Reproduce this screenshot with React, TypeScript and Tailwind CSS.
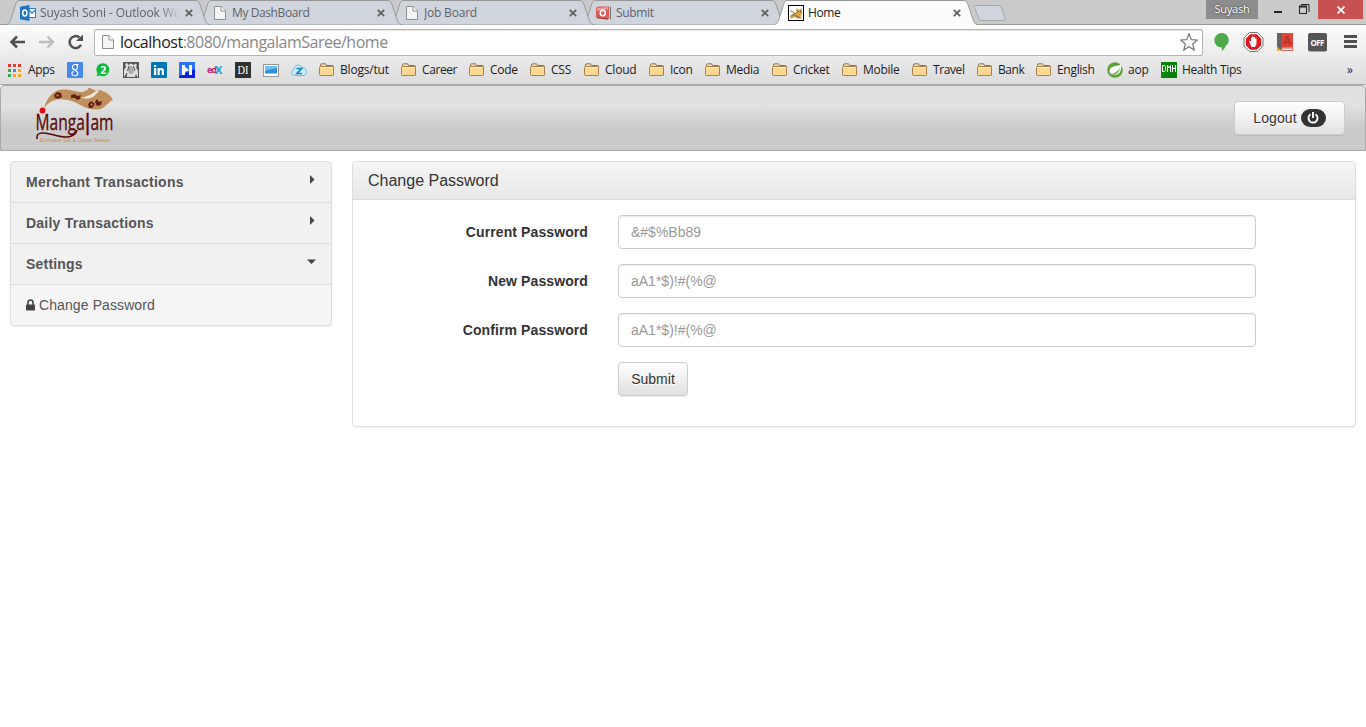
import React from "react";

const ui = "font-['Open_Sans','Noto_Sans',sans-serif]";

function PageIcon() {
  return (
    <svg width="12" height="14" viewBox="0 0 12 14" className="block">
      <path d="M.5.5H7L11.500 5V13.500H.5Z" fill="#f4f4f4" stroke="#8f8f8f" />
      <path d="M7 .5V5H11.500" fill="#fff" stroke="#8f8f8f" />
    </svg>
  );
}

function OutlookIcon() {
  return (
    <svg width="16" height="16" viewBox="0 0 16 16">
      <rect x="8.500" y="3.500" width="7" height="9" fill="#fff" stroke="#2a7fc9" />
      <path d="M9 5l3 3.200L15.500 5" fill="none" stroke="#2a7fc9" strokeWidth="1.200" />
      <path d="M0 1.800L9.500 0V16L0 14.200Z" fill="#1f74bf" />
      <ellipse cx="4.800" cy="8" rx="2.100" ry="2.900" fill="none" stroke="#fff" strokeWidth="1.500" />
    </svg>
  );
}

function SubmitIcon() {
  return (
    <svg width="16" height="16" viewBox="0 0 16 16">
      <path d="M0 3L2 1.500H13V13.500L11 14.500L0 12.500Z" fill="#d9605a" />
      <path d="M1 3L12 2V4.500L1 6Z" fill="#ec9a92" />
      <path d="M13 1.500H14V14H13Z" fill="#c9c4c4" />
      <path d="M14.500 1.500V14.500" stroke="#777" />
      <ellipse cx="6.800" cy="8" rx="2.500" ry="2.800" fill="none" stroke="#fff" strokeWidth="1.500" />
      <path d="M1 12.800L12 14" stroke="#9d2f2b" />
    </svg>
  );
}

function TomcatIcon() {
  return (
    <svg width="16" height="16" viewBox="0 0 16 16">
      <rect x=".5" y=".5" width="15" height="15" fill="#fff" stroke="#000" />
      <path d="M2 12L4 9L8 7.500L8.500 3L10.500 4.500H12L14 3V9L12.500 11L14 13.500H9L7 12L3 13.500Z" fill="#d0a24c" />
      <path d="M2 5.500L5 7L8 9M3 11L6 9.500L9 11.500L12 12.500" fill="none" stroke="#6f6350" strokeWidth=".9" />
      <path d="M9.500 6.500H10.500M12 6.500H13" stroke="#3d2f15" />
    </svg>
  );
}

type TabProps = { icon: React.ReactNode; title: string; layer: string; active?: boolean; titleClass: string; fade?: boolean };

function Tab({ icon, title, layer, active, titleClass, fade }: TabProps) {
  return (
    <div className={`grid h-[25px] w-[192px] shrink-0 ${layer}`}>
      <svg width="205" height="25" viewBox="0 0 205 25" className="overflow-visible [grid-area:1/1]">
        <path
          d={
            active
              ? "M0 25L0 24.500C3 24 4 22 5 19L9.500 4.500C10.500 1.500 12 .5 14 .5H189C192 .5 193 2 194 4.500L199 19.500C200 23 201 24.500 204 24.500V25Z"
              : "M0 24.500C3 24 4 22 5 19L9.500 4.500C10.500 1.500 12 .5 14 .5H189C192 .5 193 2 194 4.500L199 19.500C200 23 201 24.500 204 24.500Z"
          }
          fill={active ? "#fcfcfc" : "#d0d5dd"}
        />
        <path
          d="M0 24.500C3 24 4 22 5 19L9.500 4.500C10.500 1.500 12 .5 14 .5H189C192 .5 193 2 194 4.500L199 19.500C200 23 201 24.500 204 24.500"
          fill="none"
          stroke="#989898"
        />
      </svg>
      <div className="flex items-center pt-[1px] pl-[14px] [grid-area:1/1]">
        <span className="flex w-[16px] shrink-0 justify-center">{icon}</span>
        <span
          className={`ml-1 w-[140px] shrink-0 overflow-hidden whitespace-nowrap text-[12px] leading-[16px] ${titleClass} ${active ? "text-[#222]" : "text-[#5f6268]"} ${fade ? "[mask-image:linear-gradient(to_right,#000_85%,transparent)]" : ""}`}
        >
          {title}
        </span>
        <svg width="8" height="8" viewBox="0 0 8 8" className="ml-[5px] shrink-0">
          <path d="M.8.800L7.200 7.200M7.200.8L.8 7.200" stroke="#5c5c5c" strokeWidth="1.700" />
        </svg>
      </div>
    </div>
  );
}

function TabStrip() {
  return (
    <div className="flex h-[25px] bg-[#cacaca] shadow-[inset_0_-1px_0_#999]">
      <div className="flex w-[966px] shrink-0 pl-[6px]">
        <Tab icon={<OutlookIcon />} title="Suyash Soni - Outlook We" titleClass="tracking-[-0.1px]" layer="z-[4]" fade />
        <Tab icon={<PageIcon />} title="My DashBoard" titleClass="tracking-[-0.4px]" layer="z-[3]" />
        <Tab icon={<PageIcon />} title="Job Board" titleClass="tracking-[-0.2px]" layer="z-[2]" />
        <Tab icon={<SubmitIcon />} title="Submit" titleClass="tracking-[-0.35px]" layer="z-[1]" />
        <Tab icon={<TomcatIcon />} title="Home" titleClass="tracking-[-0.4px]" layer="z-[10]" active />
      </div>
      <svg width="34" height="18" viewBox="0 0 34 18" className="mt-[4px] ml-[7px] shrink-0">
        <path d="M3 1.500H25C27 1.500 28 2 28.700 4L32 14C32.500 15.500 32 16.500 30.500 16.500H9C7 16.500 6.500 16 6 14.500L1.500 3.500C1 2.200 1.500 1.500 3 1.500Z" fill="#d0d5dd" stroke="#a5a5a5" />
      </svg>
      <div className="ml-auto flex h-[19px] items-start">
        <div className="flex h-[19px] w-[52px] items-center justify-center bg-[#8c8c8c] text-[11px] tracking-[-0.2px] text-white [text-shadow:0_0_2px_#222]">Suyash</div>
        <svg width="60" height="19" viewBox="0 0 60 19">
          <path d="M16 12H24" stroke="#222" strokeWidth="2" />
          <rect x="41.500" y="6.500" width="7" height="7" fill="none" stroke="#222" />
          <path d="M41 6.500H49" stroke="#222" strokeWidth="2" />
          <path d="M43 4.500H51V12" fill="none" stroke="#222" />
        </svg>
        <div className="mr-[3px] flex h-[19px] w-[45px] items-center justify-center bg-[#c75050]">
          <svg width="8" height="8" viewBox="0 0 8 8">
            <path d="M.5.500L7.500 7.500M7.500.5L.5 7.500" stroke="#fff" strokeWidth="1.700" />
          </svg>
        </div>
      </div>
    </div>
  );
}

function Toolbar() {
  return (
    <div className="flex h-[34px] items-center">
      <svg width="84" height="20" viewBox="0 0 84 20" className="ml-[6px] shrink-0">
        <path d="M19 10H6M11 4.500L5.500 10L11 15.500" fill="none" stroke="#505050" strokeWidth="2.500" />
        <path d="M33 10H46M41.500 4.500L47 10L41.500 15.500" fill="none" stroke="#bcbcbc" strokeWidth="2.300" />
        <path d="M75 12.800A6 6 0 1 1 73.500 5.500" fill="none" stroke="#505050" strokeWidth="2.500" />
        <path d="M77 2.500V9H70Z" fill="#505050" />
      </svg>
      <div className="ml-[4px] flex h-[27px] w-[1109px] shrink-0 items-center rounded-[2px] border border-[#b5b5b5] bg-white pl-[7px] shadow-[inset_0_1px_0_#e6e6e6]">
        <PageIcon />
        <span className="ml-[6px] text-[16px] tracking-[-0.49px] whitespace-nowrap text-[#888]">
          <span className="text-[#222]">localhost</span>:8080/mangalamSaree/home
        </span>
        <svg width="18" height="18" viewBox="0 0 18 18" className="mr-[4px] ml-auto">
          <path d="M9 .8L11.300 6.600L17.300 7L12.700 11L14.200 17L9 13.700L3.800 17L5.300 11L.7 7L6.700 6.600Z" fill="#fff" stroke="#777" strokeWidth="1.200" />
        </svg>
      </div>
      <svg width="160" height="20" viewBox="0 0 160 20" className="ml-[3px] shrink-0 overflow-visible">
        <path d="M15.500 1A7.200 7 0 0 1 20 13.500Q18.500 17 16 19L15.700 15.500A7.200 7.200 0 0 1 15.500 1Z" fill="#4da94a" />
        <path d="M43.400 .5H51.600L57 6V14L51.600 19.500H43.400L38 14V6Z" fill="#fff" stroke="#777" />
        <path d="M44.200 2.300H50.800L55.200 6.700V13.300L50.800 17.700H44.200L39.800 13.300V6.700Z" fill="#dc1a22" />
        <path d="M43 9L44.300 8.700L45 10V5.500H46.300V9V4.500H47.700V9V5H49.100V9.500V6.500H50.500V12L49 15H45.500Z" fill="#fff" />
        <rect x="71" y="1" width="5" height="17" fill="#62666a" />
        <rect x="76" y="1" width="11" height="14.500" fill="#df4437" />
        <path d="M76 16H87V18.500H75Z" fill="#f1e8e8" stroke="#ce3b32" strokeWidth=".7" />
        <path d="M71 19V14.500L73.500 17L76 18.500Z" fill="#f0ae24" />
        <text x="81" y="13" textAnchor="middle" fontSize="11.500" fontWeight="700" fill="#b93228">A</text>
        <rect x="102" y="1" width="19" height="18.500" rx="2" fill="#555" />
        <text x="111.500" y="13.500" textAnchor="middle" fontSize="8" fontWeight="700" textLength="14" fill="#fff">OFF</text>
        <path d="M138 4.500H151M138 9.500H151M138 14.500H151" stroke="#515151" strokeWidth="2.800" />
      </svg>
    </div>
  );
}

function Folder() {
  return (
    <svg width="15" height="14" viewBox="0 0 15 14" className="shrink-0">
      <path d="M1.500 12V2Q1.500 .8 2.500 .8H6.500L7.500 2.500H13.500Q14.500 2.500 14.500 3.500V12Z" fill="#f4dcaa" stroke="#8c7350" />
      <path d="M.5 4.500Q.5 3.500 1.500 3.500H13.500Q14.500 3.500 14.500 4.500V11.500Q14.500 12.500 13.500 12.500H1.500Q.5 12.500 .5 11.500Z" fill="#ffd994" stroke="#a97f4c" />
      <path d="M1.500 4.500H13.500" stroke="#fff0c8" />
    </svg>
  );
}

const folders = [
  { name: "Blogs/tut", width: "w-[82px]", spacing: "tracking-[-0.2px]" },
  { name: "Career", width: "w-[68px]", spacing: "tracking-[-0.4px]" },
  { name: "Code", width: "w-[61px]", spacing: "tracking-[-0.3px]" },
  { name: "CSS", width: "w-[54px]", spacing: "tracking-[-0.2px]" },
  { name: "Cloud", width: "w-[65px]", spacing: "tracking-[-0.2px]" },
  { name: "Icon", width: "w-[56px]", spacing: "tracking-[-0.3px]" },
  { name: "Media", width: "w-[67px]", spacing: "tracking-[-0.3px]" },
  { name: "Cricket", width: "w-[70px]", spacing: "tracking-[-0.3px]" },
  { name: "Mobile", width: "w-[70px]", spacing: "tracking-[-0.3px]" },
  { name: "Travel", width: "w-[65px]", spacing: "tracking-[-0.4px]" },
  { name: "Bank", width: "w-[59px]", spacing: "tracking-[-0.4px]" },
  { name: "English", width: "w-[71px]", spacing: "tracking-[-0.3px]" },
];

const dots = ["#e33b2e", "#e33b2e", "#e33b2e", "#3aa757", "#4285f4", "#f4a623", "#3aa757", "#f4a623", "#f4a623"];

function SiteIcons() {
  return (
    <div className="flex w-[252px] shrink-0 gap-[12px]">
      <svg width="16" height="16" viewBox="0 0 16 16"><rect width="16" height="16" rx="1" fill="#4787ed" /><path d="M11.500 2.500H8A2.700 2.600 0 1 0 8.500 7.800L9.500 9.500A3 2.300 0 1 1 6.500 9.400M9.500 2.700A3 3 0 0 1 8.500 7.800" fill="none" stroke="#fff" strokeWidth="1.200" /></svg>
      <svg width="16" height="16" viewBox="0 0 16 16"><path d="M8 .8A7 7 0 1 1 4.500 14L1 15L2 11.500A7 7 0 0 1 8 .8Z" fill="#10b83c" stroke="#fff" strokeWidth=".6" /><text x="8.200" y="12" textAnchor="middle" fontSize="10.500" fontWeight="700" fill="#fff">2</text></svg>
      <svg width="16" height="16" viewBox="0 0 16 16"><rect width="16" height="16" fill="#555" /><path d="M2 2L4 1L5.500 3L8 1.500L11 3L12.500 1.500L14 3L13 5L15 9V16L13 12L12 15H4L3 12L1 15V8L3 5Z" fill="#dededc" /><ellipse cx="8" cy="8" rx="2.800" ry="4" fill="#aaa" /><path d="M4.500 9L6 4M10.500 4L12 9M4 11L3 14" stroke="#555" /></svg>
      <svg width="16" height="16" viewBox="0 0 16 16"><rect width="16" height="16" rx="1" fill="#0077b5" /><path d="M3 6H5.200V13H3ZM3 3H5.200V5H3ZM6.500 6H8.600V7C9.500 5.500 13 5.300 13 9V13H10.800V9.500C10.800 7.300 8.700 7.500 8.700 9.500V13H6.500Z" fill="#fff" /></svg>
      <svg width="16" height="16" viewBox="0 0 16 16"><rect width="16" height="16" fill="#2b74fa" /><path d="M16 7V16H0V14Z" fill="#0a20e0" /><path d="M3 3H6V13H3ZM10 3H13V13H10ZM6 5L10 8L6 10Z" fill="#fff" /></svg>
      <svg width="16" height="16" viewBox="0 0 16 16"><text x="0" y="11" fontSize="9" fontWeight="700" textLength="10" fill="#bd2474">ed</text><text x="8" y="12" fontSize="11" fontWeight="700" fill="#229ccc">X</text></svg>
      <svg width="16" height="16" viewBox="0 0 16 16"><rect width="16" height="16" fill="#303030" /><text x="8" y="12.300" textAnchor="middle" fontSize="12" textLength="11" lengthAdjust="spacingAndGlyphs" fill="#fff" fontFamily="Liberation Serif">DI</text></svg>
      <svg width="16" height="16" viewBox="0 0 16 16"><rect x=".5" y="2.500" width="15" height="12" fill="#fff" stroke="#979797" /><rect x="2" y="4" width="12" height="7.500" fill="#2a91df" /><path d="M2 4H14V6L2 9Z" fill="#72c0f2" /></svg>
      <svg width="16" height="16" viewBox="0 0 16 16"><path d="M4 13.500C-.5 13.500 -.2 8 3 7.700C2.800 3 9 1 11 5.500C16 5 17 13.500 12 13.500Z" fill="#cceefa" stroke="#72b9d7" /><path d="M5.500 6.500H10.500L6 11.500H11" fill="none" stroke="#1786be" strokeWidth="1.700" /></svg>
    </div>
  );
}

function Bookmarks() {
  return (
    <div className="flex h-[22px] items-center text-[12px] leading-[16px] whitespace-nowrap text-[#1b1b1b]">
      <div className="flex w-[67px] shrink-0 items-center gap-[7px] pl-[8px]">
        <div className="grid w-[13px] grid-cols-3 gap-[2px]">
          {dots.map((c, i) => (
            <span key={i} className="h-[3px] w-[3px]" style={{ backgroundColor: c }} />
          ))}
        </div>
        <span className="tracking-[-0.3px]">Apps</span>
      </div>
      <SiteIcons />
      {folders.map((f) => (
        <div key={f.name} className={`flex shrink-0 items-center gap-[6px] ${f.width} ${f.spacing}`}>
          <Folder />
          {f.name}
        </div>
      ))}
      <div className="flex w-[54px] shrink-0 items-center gap-[5px] tracking-[-0.2px]">
        <svg width="16" height="16" viewBox="0 0 16 16" className="shrink-0"><circle cx="8" cy="8" r="7.800" fill="#5fa134" /><path d="M14 2C12 5 3 2.500 2.500 9C2.500 14 11.500 14.500 13.500 9C14.300 7 14.500 4 14 2Z" fill="#fff" /><path d="M3 12C8 12 11 9 13 5.500C12 12 7 14 3 12Z" fill="#6aab40" /></svg>
        aop
      </div>
      <div className="flex items-center gap-[5px] tracking-[-0.3px]">
        <svg width="16" height="16" viewBox="0 0 16 16" className="shrink-0"><rect width="16" height="16" fill="#078108" /><path d="M1.500 3.500V9.500H3.500L4.500 8.500V4.500L3.500 3.500ZM6.500 10V3.500L8 6L9.500 3.500V10M11.500 3V10M14.500 3V10M11.500 6.500H14.500" fill="none" stroke="#fff" /></svg>
        Health Tips
      </div>
      <span className="mr-[13px] ml-auto text-[12px] text-[#222]">»</span>
    </div>
  );
}

function Logo() {
  return (
    <svg width="80" height="60" viewBox="0 0 80 60" className="ml-[33px] block overflow-visible">
      <path d="M10 21C13 10 20 2.500 29 2.500C38 2.500 42 5 48 5C51 5 51 3 54 3C54 1 55 .5 56 1L62 4L65 2.500C72 5 77 8 79 13C74 14 72 23 61 22.500C48 22 45 15 34 13C22 11 17 13 10 21Z" fill="#bf905d" />
      <path d="M46 10.500C54 11 59 5 66 2.500C61 9 57 14 46 10.500Z" fill="#eee7dd" />
      <path d="M20 8l3-3 4 1 1 4-4 2-3-1ZM37 8l4-1 2 2 4-1-1 4-3 1-2-2-4 0ZM54 17l3-3 4 3-3 4-3 0ZM61 15l2 -3 2 3 3-1-1 4-4 1Z" fill="#632114" />
      <circle cx="23.500" cy="8.500" r="1.100" fill="#c39562" />
      <circle cx="57.500" cy="17.500" r="1.100" fill="#c39562" />
      <text x="1.500" y="43" textLength="78" lengthAdjust="spacingAndGlyphs" fontFamily="Open Sans" fontSize="21" fill="#5b0909" stroke="#5b0909" strokeWidth=".3">
        Manga
        <tspan dy="5" fontSize="30">l</tspan>
        <tspan dy="-5">am</tspan>
      </text>
      <path d="M3.200 52C1 43 14 46 22 48.500C31 51 41 51 43 43" fill="none" stroke="#5b0909" strokeWidth="1.500" />
      <circle cx="8.500" cy="23.500" r="2.900" fill="#e40912" />
      <text x="6" y="55" textLength="70" lengthAdjust="spacingAndGlyphs" fontFamily="Liberation Sans" fontSize="5.500" fill="#c58c4b">Exclusive Silk &amp; Cotton Sarees</text>
    </svg>
  );
}

function Header() {
  return (
    <header className="flex h-[66px] items-start justify-between rounded-t-[4px] border border-[#a9a9a9] bg-[linear-gradient(#dedede_0%,#e2e2e2_30%,#cbcbcb_64%,#cbcbcb_100%)]">
      <div className="pt-[1px]"><Logo /></div>
      <button className="mt-[15px] mr-[20px] flex h-[34px] w-[111px] items-center justify-center gap-[4px] rounded-[4px] border border-[#ccc] bg-linear-to-b from-white to-[#e2e2e2] text-[14px] text-[#333] shadow-[0_1px_1px_rgba(0,0,0,0.08)] [text-shadow:0_1px_0_#fff]">
        <span className="tracking-[0.1px]">Logout</span>
        <span className="flex h-[18px] w-[25px] items-center justify-center rounded-[9px] bg-[#333]">
          <svg width="12" height="12" viewBox="0 0 12 12">
            <path d="M3.500 2.300A4.500 4.500 0 1 0 8.500 2.300M6 0V6" fill="none" stroke="#fff" strokeWidth="1.900" />
          </svg>
        </span>
      </button>
    </header>
  );
}

function MenuItem({ label, open, tracking }: { label: string; open?: boolean; tracking: string }) {
  return (
    <div className={`flex h-[41px] items-center justify-between border-b border-[#ddd] bg-[#f1f1f1] pr-[15px] pl-[15px] text-[14px] font-bold text-[#555] ${tracking}`}>
      {label}
      <svg width="9" height="9" viewBox="0 0 9 9" className="mb-[6px]">
        {open ? <path d="M0 2.500H9L4.500 7Z" fill="#444" /> : <path d="M3 0L7.500 4.500L3 9Z" fill="#444" />}
      </svg>
    </div>
  );
}

function Sidebar() {
  return (
    <aside className="h-[165px] w-[322px] shrink-0 overflow-hidden rounded-[4px] border border-[#ddd] bg-[#f5f5f5] shadow-[0_1px_2px_rgba(0,0,0,0.07)]">
      <MenuItem label="Merchant Transactions" tracking="tracking-[0.25px]" />
      <MenuItem label="Daily Transactions" tracking="tracking-[0.23px]" />
      <MenuItem label="Settings" tracking="tracking-[0.2px]" open />
      <div className="flex h-[40px] items-center gap-[4px] pl-[15px] text-[14px] tracking-[0.1px] text-[#555]">
        <svg width="9" height="12" viewBox="0 0 9 12">
          <path d="M2 6V3.500A2.500 2.500 0 0 1 7 3.500V6" fill="none" stroke="#444" strokeWidth="1.600" />
          <rect y="5.500" width="9" height="6" rx=".7" fill="#444" />
        </svg>
        Change Password
      </div>
    </aside>
  );
}

const fields = [
  { label: "Current Password", hint: "&#$%Bb89" },
  { label: "New Password", hint: "aA1*$)!#(%@" },
  { label: "Confirm Password", hint: "aA1*$)!#(%@" },
];

function PasswordPanel() {
  return (
    <main className="h-[266px] w-[1004px] shrink-0 overflow-hidden rounded-[4px] border border-[#ddd] bg-white shadow-[0_1px_2px_rgba(0,0,0,0.05)]">
      <h1 className="flex h-[38px] items-center border-b border-[#ddd] bg-linear-to-b from-[#f5f5f5] to-[#e8e8e8] pl-[15px] text-[16px] text-[#333]">Change Password</h1>
      <form className="flex flex-col gap-[15px] pt-[15px] pl-[15px]">
        {fields.map((f) => (
          <label key={f.label} className="flex items-center gap-[30px]">
            <span className="w-[220px] text-right text-[14px] font-bold tracking-[0.1px] text-[#333]">{f.label}</span>
            <input
              placeholder={f.hint}
              className="h-[34px] w-[638px] rounded-[4px] border border-[#ccc] px-[12px] text-[14px] shadow-[inset_0_1px_1px_rgba(0,0,0,0.075)] placeholder:text-[#999]"
            />
          </label>
        ))}
        <button type="button" className="ml-[250px] h-[34px] w-[70px] rounded-[4px] border border-[#ccc] bg-linear-to-b from-white to-[#e0e0e0] text-[14px] text-[#333] shadow-[0_1px_1px_rgba(0,0,0,0.08)] [text-shadow:0_1px_0_#fff]">
          Submit
        </button>
      </form>
    </main>
  );
}

export default function App() {
  return (
    <div className="h-[727px] w-[1366px] overflow-hidden bg-white">
      <div className={ui}>
        <TabStrip />
        <div className="h-[60px] border-b border-[#a9a9a9] bg-linear-to-b from-[#fcfcfc] to-[#dcdcdc]">
          <Toolbar />
          <Bookmarks />
        </div>
      </div>
      <div className="font-['Liberation_Sans',Arial,sans-serif]">
        <Header />
        <div className="flex gap-[20px] px-[10px] pt-[10px]">
          <Sidebar />
          <PasswordPanel />
        </div>
      </div>
    </div>
  );
}
